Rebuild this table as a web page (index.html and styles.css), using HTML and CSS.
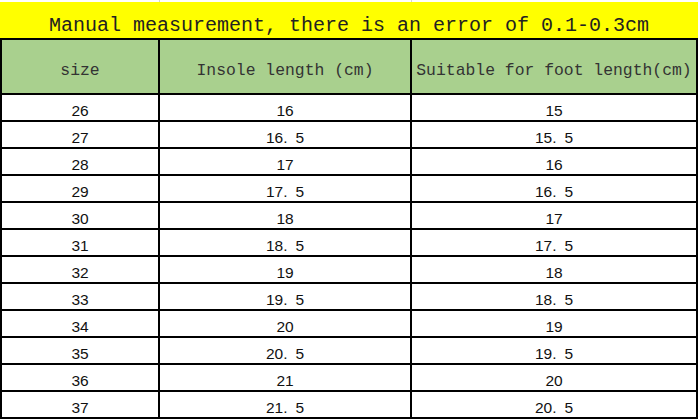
FILE: index.html
```html
<!DOCTYPE html>
<html lang="en">
<head>
<meta charset="utf-8">
<title>Size chart</title>
<link rel="stylesheet" href="styles.css">
</head>
<body>
<div class="page">
  <div class="grid-top"><span class="g1"></span><span class="g2"></span></div>
  <div class="title">Manual measurement, there is an error of 0.1-0.3cm</div>
  <table class="sizes">
    <thead>
      <tr><th class="c1">size</th><th class="c2">Insole length (cm)</th><th class="c3">Suitable for foot length(cm)</th></tr>
    </thead>
    <tbody>
      <tr><td>26</td><td>16</td><td>15</td></tr>
      <tr><td>27</td><td>16<span class="dot">.</span>5</td><td>15<span class="dot">.</span>5</td></tr>
      <tr><td>28</td><td>17</td><td>16</td></tr>
      <tr><td>29</td><td>17<span class="dot">.</span>5</td><td>16<span class="dot">.</span>5</td></tr>
      <tr><td>30</td><td>18</td><td>17</td></tr>
      <tr><td>31</td><td>18<span class="dot">.</span>5</td><td>17<span class="dot">.</span>5</td></tr>
      <tr><td>32</td><td>19</td><td>18</td></tr>
      <tr><td>33</td><td>19<span class="dot">.</span>5</td><td>18<span class="dot">.</span>5</td></tr>
      <tr><td>34</td><td>20</td><td>19</td></tr>
      <tr><td>35</td><td>20<span class="dot">.</span>5</td><td>19<span class="dot">.</span>5</td></tr>
      <tr><td>36</td><td>21</td><td>20</td></tr>
      <tr><td>37</td><td>21<span class="dot">.</span>5</td><td>20<span class="dot">.</span>5</td></tr>
    </tbody>
  </table>
</div>
</body>
</html>
```
FILE: styles.css
```css
html, body {
  margin: 0;
  padding: 0;
  background: #ffffff;
}

.page {
  width: 698px;
}

.grid-top {
  display: flex;
  height: 2px;
}

.grid-top .g1 {
  width: 159px;
  border-right: 1px solid #d4d4d4;
}

.grid-top .g2 {
  width: 251px;
  border-right: 1px solid #d4d4d4;
}

.title {
  box-sizing: border-box;
  height: 36px;
  padding-top: 11px;
  line-height: 25px;
  background: #ffff00;
  color: #222222;
  font-family: "Liberation Mono", monospace;
  font-size: 20px;
  text-align: center;
  white-space: nowrap;
}

.sizes {
  box-sizing: border-box;
  width: 698px;
  table-layout: fixed;
  border-collapse: separate;
  border-spacing: 0;
  border-left: 2px solid #000000;
  border-top: 2px solid #000000;
}

.sizes th,
.sizes td {
  box-sizing: border-box;
  border-right: 2px solid #000000;
  border-bottom: 2px solid #000000;
  padding: 0;
  text-align: center;
  vertical-align: top;
  white-space: nowrap;
}

.sizes thead tr {
  height: 55px;
}

.sizes th {
  background: #a9d08e;
  color: #333333;
  font-family: "Liberation Mono", monospace;
  font-size: 16.4px;
  font-weight: normal;
  line-height: 20px;
  padding-top: 21px;
}

.sizes .c1 { width: 158px; }
.sizes .c2 { width: 252px; }
.sizes .c3 { width: 286px; }

.sizes tbody tr {
  height: 27px;
}

.sizes td {
  color: #111111;
  font-family: "Liberation Sans", Arial, sans-serif;
  font-size: 15.5px;
  line-height: 18px;
  padding-top: 7px;
}

.dot {
  margin-right: 8px;
}
```
